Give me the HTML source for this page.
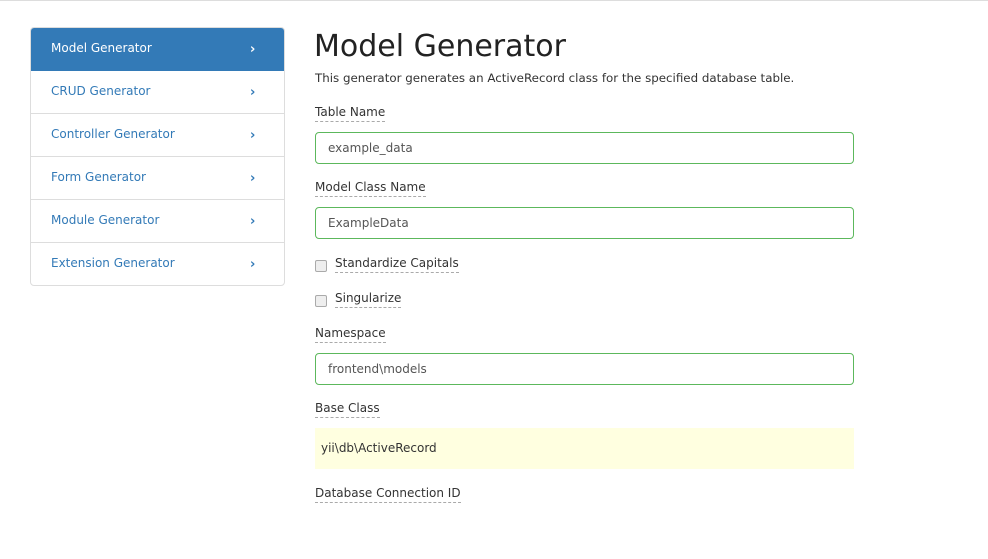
<!DOCTYPE html>
<html><head><style>
*{box-sizing:border-box;margin:0;padding:0}
body{width:988px;height:559px;background:#fff;font-family:"DejaVu Sans","Liberation Sans",sans-serif;color:#333;position:relative;overflow:hidden;border-top:1px solid #ddd}
.a{position:absolute;white-space:nowrap}
.side{position:absolute;left:30px;top:26px;width:255px;height:259px;border:1px solid #ddd;border-radius:4px;overflow:hidden}
.it{height:43px;border-bottom:1px solid #ddd;color:#337ab7;font-size:12px;padding-left:20px;line-height:41px;position:relative}
.it:last-child{border-bottom:none}
.it.on{background:#337ab7;color:#fff;border-color:#337ab7}
.it .c{position:absolute;left:219px;top:1px;font-weight:bold;font-size:13px}
.lbl{font-size:12px;color:#333;border-bottom:1px dashed #aaa;padding-bottom:1px;line-height:15px}
.inp{position:absolute;left:315px;width:539px;height:32px;border:1px solid #5cb85c;border-radius:4px;font-size:12px;padding-left:12px;line-height:30px;color:#555}
.cb{position:absolute;left:315px;width:12px;height:12px;border:1px solid #aaa;border-radius:2px;background:#eee}
</style></head><body>
<div class="side">
<div class="it on">Model Generator<span class="c">›</span></div>
<div class="it">CRUD Generator<span class="c">›</span></div>
<div class="it">Controller Generator<span class="c">›</span></div>
<div class="it">Form Generator<span class="c">›</span></div>
<div class="it">Module Generator<span class="c">›</span></div>
<div class="it">Extension Generator<span class="c">›</span></div>
</div>
<div class="a" style="left:314px;top:28px;font-size:30px;color:#222">Model Generator</div>
<div class="a" style="left:315px;top:70px;font-size:11.85px">This generator generates an ActiveRecord class for the specified database table.</div>
<div class="a lbl" style="left:315px;top:104px">Table Name</div>
<div class="inp" style="top:131px">example_data</div>
<div class="a lbl" style="left:315px;top:179px">Model Class Name</div>
<div class="inp" style="top:206px">ExampleData</div>
<div class="cb" style="top:259px"></div>
<div class="a lbl" style="left:335px;top:255px">Standardize Capitals</div>
<div class="cb" style="top:294px"></div>
<div class="a lbl" style="left:335px;top:290px">Singularize</div>
<div class="a lbl" style="left:315px;top:325px">Namespace</div>
<div class="inp" style="top:352px">frontend\models</div>
<div class="a lbl" style="left:315px;top:400px">Base Class</div>
<div class="a" style="left:315px;top:427px;width:539px;height:41px;background:#ffffe0;font-size:12px;line-height:40px;padding-left:6px">yii\db\ActiveRecord</div>
<div class="a lbl" style="left:315px;top:485px">Database Connection ID</div>
</body></html>
